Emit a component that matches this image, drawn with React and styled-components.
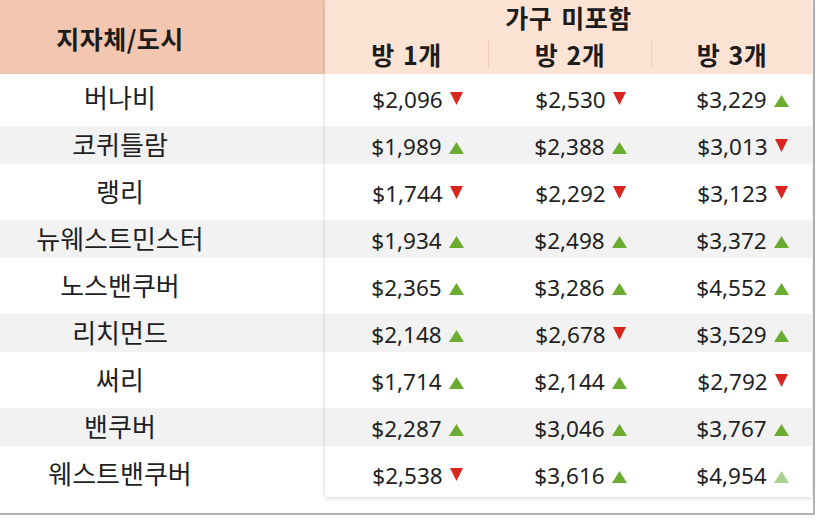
import React from "react";
import styled, { createGlobalStyle } from "styled-components";

const GlobalStyle = createGlobalStyle`
  html, body { margin: 0; padding: 0; background: #ffffff; }
  body { font-family: "Noto Sans", "Noto Sans CJK KR", sans-serif; color: #1f1f1f; }
`;

const data = [
  { name: "버나비", v: [["$2,096", "down"], ["$2,530", "down"], ["$3,229", "up"]] },
  { name: "코퀴틀람", v: [["$1,989", "up"], ["$2,388", "up"], ["$3,013", "down"]] },
  { name: "랭리", v: [["$1,744", "down"], ["$2,292", "down"], ["$3,123", "down"]] },
  { name: "뉴웨스트민스터", v: [["$1,934", "up"], ["$2,498", "up"], ["$3,372", "up"]] },
  { name: "노스밴쿠버", v: [["$2,365", "up"], ["$3,286", "up"], ["$4,552", "up"]] },
  { name: "리치먼드", v: [["$2,148", "up"], ["$2,678", "down"], ["$3,529", "up"]] },
  { name: "써리", v: [["$1,714", "up"], ["$2,144", "up"], ["$2,792", "down"]] },
  { name: "밴쿠버", v: [["$2,287", "up"], ["$3,046", "up"], ["$3,767", "up"]] },
  { name: "웨스트밴쿠버", v: [["$2,538", "down"], ["$3,616", "up"], ["$4,954", "faint"]] },
];

const Frame = styled.div`
  width: 813px;
  height: 513px;
  border-right: 2px solid #b3b3b3;
  border-bottom: 2px solid #b3b3b3;
  display: flex;
  align-items: flex-start;
  background: #ffffff;
`;

const LeftBlock = styled.div`
  width: 325px;
  display: flex;
  flex-direction: column;
`;

const Card = styled.div`
  width: 487px;
  display: flex;
  flex-direction: column;
  background: #ffffff;
  box-shadow: 0 2px 5px rgba(0, 0, 0, 0.13), -1px 0 2px rgba(0, 0, 0, 0.04);
`;

const HeadText = styled.div`
  font-family: "Noto Sans CJK KR", sans-serif;
  font-weight: 700;
  font-size: 25px;
  letter-spacing: 0.5px;
  color: #1c1c1c;
  line-height: 1;
`;

const LeftHeader = styled(HeadText)`
  height: 74px;
  box-sizing: border-box;
  padding: 2px 85px 0 0;
  background: #f3c6b0;
  display: flex;
  align-items: center;
  justify-content: center;
`;

const RightHeader = styled.div`
  height: 74px;
  box-sizing: border-box;
  padding: 2px 0 6px;
  background: #fde3d4;
  display: flex;
  flex-direction: column;
  gap: 8px;
`;

const GroupTitle = styled(HeadText)`
  height: 30px;
  display: flex;
  align-items: center;
  justify-content: center;
  word-spacing: 3px;
`;

const SubRow = styled.div`
  height: 28px;
  display: grid;
  grid-template-columns: 163px 163px 161px;
`;

const SubHead = styled(HeadText)`
  display: flex;
  align-items: center;
  justify-content: center;
  word-spacing: 2px;
  border-left: ${(p) => (p.$first ? "none" : "1px solid #f0cdbb")};
`;

const Row = styled.div`
  height: 47px;
  box-sizing: border-box;
  padding: 4.5px 0;
`;

const Band = styled.div`
  height: 38px;
  background: ${(p) => (p.$shaded ? "#f2f2f2" : "transparent")};
  display: ${(p) => (p.$grid ? "grid" : "flex")};
  grid-template-columns: 163px 163px 161px;
  align-items: center;
  justify-content: center;
`;

const NameBand = styled(Band)`
  padding: 0 85px 2px 0;
  box-sizing: border-box;
  font-family: "Noto Sans CJK KR", sans-serif;
  font-size: 26px;
  color: #1f1f1f;
`;

const Cell = styled.div`
  display: flex;
  align-items: center;
  justify-content: center;
  padding: 3px 0 0 22px;
  gap: 7px;
  font-size: 22.5px;
  color: #1f1f1f;
`;

const Tri = styled.svg`
  flex: none;
  position: relative;
  top: ${(p) => (p.$down ? "-1px" : "2px")};
`;

function Arrow({ dir }) {
  if (dir === "down") {
    return (
      <Tri $down width="13" height="13" viewBox="0 0 13 13">
        <polygon points="0,0 13,0 6.5,13" fill="#d8261e" />
      </Tri>
    );
  }
  const color = dir === "faint" ? "#a9d18f" : "#6aac2f";
  return (
    <Tri width="15" height="12" viewBox="0 0 15 12">
      <polygon points="7.5,0 15,12 0,12" fill={color} />
    </Tri>
  );
}

export default function App() {
  return (
    <>
      <GlobalStyle />
      <Frame>
        <LeftBlock>
          <LeftHeader>지자체/도시</LeftHeader>
          {data.map((r, i) => (
            <Row key={r.name}>
              <NameBand $shaded={i % 2 === 1}>{r.name}</NameBand>
            </Row>
          ))}
        </LeftBlock>
        <Card>
          <RightHeader>
            <GroupTitle>가구 미포함</GroupTitle>
            <SubRow>
              <SubHead $first>방 1개</SubHead>
              <SubHead>방 2개</SubHead>
              <SubHead>방 3개</SubHead>
            </SubRow>
          </RightHeader>
          {data.map((r, i) => (
            <Row key={r.name}>
              <Band $grid $shaded={i % 2 === 1}>
                {r.v.map(([price, dir], j) => (
                  <Cell key={j}>
                    <span>{price}</span>
                    <Arrow dir={dir} />
                  </Cell>
                ))}
              </Band>
            </Row>
          ))}
        </Card>
      </Frame>
    </>
  );
}
